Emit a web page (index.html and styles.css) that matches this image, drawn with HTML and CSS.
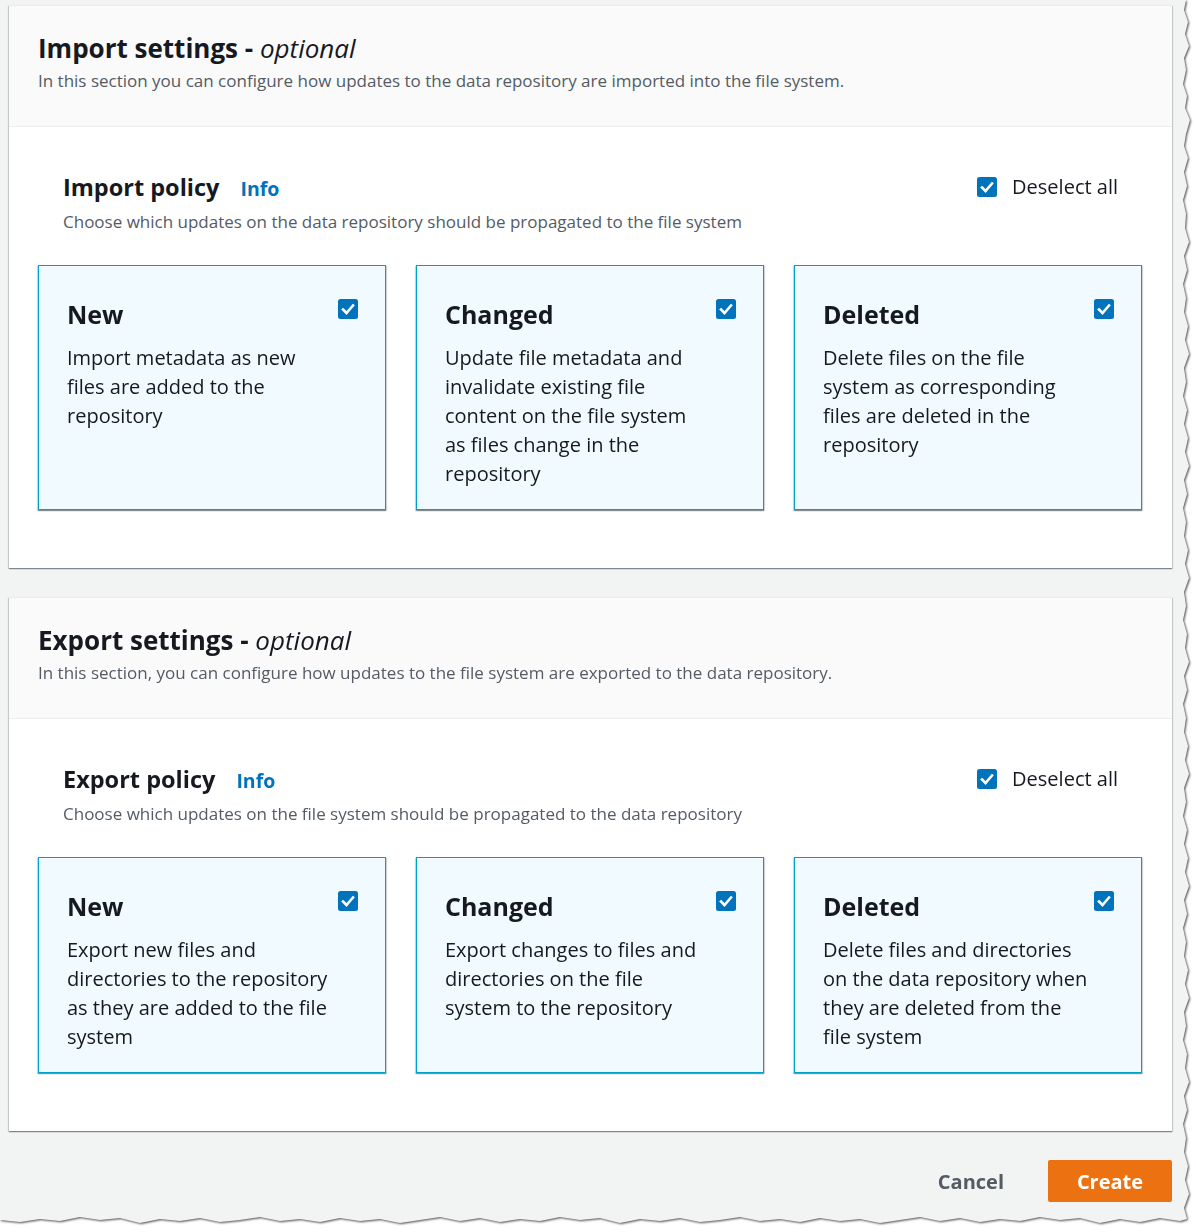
FILE: index.html
```html
<!DOCTYPE html>
<html lang="en">
<head>
<meta charset="utf-8">
<title>Import and export settings</title>
<link rel="stylesheet" href="styles.css">
</head>
<body>
<div class="sheet">
  <div class="paper">
    <section class="panel">
      <header class="panel-head">
        <h2>Import settings - <i>optional</i></h2>
        <p>In this section you can configure how updates to the data repository are imported into the file system.</p>
      </header>
      <div class="panel-body">
        <div class="policy-head">
          <div class="policy-text">
            <div class="policy-title"><h3>Import policy</h3><a class="info" href="#">Info</a></div>
            <p class="policy-desc">Choose which updates on the data repository should be propagated to the file system</p>
          </div>
          <label class="deselect">
            <svg class="cb" viewBox="0 0 20 20" width="20" height="20"><rect x="0" y="0" width="20" height="20" rx="2.5" fill="#0073bb"/><polyline points="5,10.5 8.5,14 15,6.5" fill="none" stroke="#fff" stroke-width="2.6" stroke-linecap="square"/></svg>
            <span>Deselect all</span>
          </label>
        </div>
        <div class="tiles">
          <div class="tile">
            <div class="tile-text"><h4>New</h4><p>Import metadata as new<br>files are added to the<br>repository</p></div>
            <svg class="cb" viewBox="0 0 20 20" width="20" height="20"><rect x="0" y="0" width="20" height="20" rx="2.5" fill="#0073bb"/><polyline points="5,10.5 8.5,14 15,6.5" fill="none" stroke="#fff" stroke-width="2.6" stroke-linecap="square"/></svg>
          </div>
          <div class="tile">
            <div class="tile-text"><h4>Changed</h4><p>Update file metadata and<br>invalidate existing file<br>content on the file system<br>as files change in the<br>repository</p></div>
            <svg class="cb" viewBox="0 0 20 20" width="20" height="20"><rect x="0" y="0" width="20" height="20" rx="2.5" fill="#0073bb"/><polyline points="5,10.5 8.5,14 15,6.5" fill="none" stroke="#fff" stroke-width="2.6" stroke-linecap="square"/></svg>
          </div>
          <div class="tile">
            <div class="tile-text"><h4>Deleted</h4><p>Delete files on the file<br>system as corresponding<br>files are deleted in the<br>repository</p></div>
            <svg class="cb" viewBox="0 0 20 20" width="20" height="20"><rect x="0" y="0" width="20" height="20" rx="2.5" fill="#0073bb"/><polyline points="5,10.5 8.5,14 15,6.5" fill="none" stroke="#fff" stroke-width="2.6" stroke-linecap="square"/></svg>
          </div>
        </div>
      </div>
    </section>

    <section class="panel">
      <header class="panel-head">
        <h2>Export settings - <i>optional</i></h2>
        <p>In this section, you can configure how updates to the file system are exported to the data repository.</p>
      </header>
      <div class="panel-body">
        <div class="policy-head">
          <div class="policy-text">
            <div class="policy-title"><h3>Export policy</h3><a class="info" href="#">Info</a></div>
            <p class="policy-desc">Choose which updates on the file system should be propagated to the data repository</p>
          </div>
          <label class="deselect">
            <svg class="cb" viewBox="0 0 20 20" width="20" height="20"><rect x="0" y="0" width="20" height="20" rx="2.5" fill="#0073bb"/><polyline points="5,10.5 8.5,14 15,6.5" fill="none" stroke="#fff" stroke-width="2.6" stroke-linecap="square"/></svg>
            <span>Deselect all</span>
          </label>
        </div>
        <div class="tiles">
          <div class="tile">
            <div class="tile-text"><h4>New</h4><p>Export new files and<br>directories to the repository<br>as they are added to the file<br>system</p></div>
            <svg class="cb" viewBox="0 0 20 20" width="20" height="20"><rect x="0" y="0" width="20" height="20" rx="2.5" fill="#0073bb"/><polyline points="5,10.5 8.5,14 15,6.5" fill="none" stroke="#fff" stroke-width="2.6" stroke-linecap="square"/></svg>
          </div>
          <div class="tile">
            <div class="tile-text"><h4>Changed</h4><p>Export changes to files and<br>directories on the file<br>system to the repository</p></div>
            <svg class="cb" viewBox="0 0 20 20" width="20" height="20"><rect x="0" y="0" width="20" height="20" rx="2.5" fill="#0073bb"/><polyline points="5,10.5 8.5,14 15,6.5" fill="none" stroke="#fff" stroke-width="2.6" stroke-linecap="square"/></svg>
          </div>
          <div class="tile">
            <div class="tile-text"><h4>Deleted</h4><p>Delete files and directories<br>on the data repository when<br>they are deleted from the<br>file system</p></div>
            <svg class="cb" viewBox="0 0 20 20" width="20" height="20"><rect x="0" y="0" width="20" height="20" rx="2.5" fill="#0073bb"/><polyline points="5,10.5 8.5,14 15,6.5" fill="none" stroke="#fff" stroke-width="2.6" stroke-linecap="square"/></svg>
          </div>
        </div>
      </div>
    </section>

    <div class="actions">
      <button class="btn-cancel" type="button">Cancel</button>
      <button class="btn-create" type="button">Create</button>
    </div>
  </div>
</div>
</body>
</html>
```
FILE: styles.css
```css
html, body {
  margin: 0;
  padding: 0;
  background: #ffffff;
}
body {
  font-family: "Open Sans", "Noto Sans", sans-serif;
  color: #16191f;
  width: 1196px;
  height: 1232px;
  overflow: hidden;
}
.sheet {
  filter: drop-shadow(1px 1px 1.2px rgba(0, 0, 0, 0.7));
  width: 1192px;
}
.paper {
  background: #f2f3f3;
  width: 1192px;
  height: 1226px;
  box-sizing: border-box;
  padding: 5px 20px 0 9px;
  clip-path: polygon(0 0, 1186px 0, 1184px 10px, 1188px 22px, 1185px 34px, 1189px 46px, 1184px 58px, 1186px 70px, 1183px 84px, 1187px 96px, 1185px 108px, 1190px 120px, 1186px 134px, 1184px 146px, 1188px 158px, 1184px 172px, 1187px 186px, 1183px 200px, 1186px 214px, 1185px 228px, 1189px 242px, 1184px 256px, 1187px 270px, 1183px 284px, 1186px 298px, 1184px 312px, 1188px 326px, 1185px 340px, 1189px 354px, 1184px 368px, 1186px 382px, 1183px 396px, 1187px 410px, 1184px 424px, 1188px 438px, 1185px 452px, 1189px 466px, 1184px 480px, 1187px 494px, 1183px 508px, 1186px 522px, 1184px 536px, 1188px 550px, 1185px 564px, 1189px 578px, 1184px 592px, 1186px 606px, 1183px 620px, 1187px 634px, 1185px 648px, 1189px 662px, 1184px 676px, 1187px 690px, 1183px 704px, 1186px 718px, 1184px 732px, 1188px 746px, 1185px 760px, 1189px 774px, 1184px 788px, 1186px 802px, 1183px 816px, 1187px 830px, 1184px 844px, 1188px 858px, 1185px 872px, 1189px 886px, 1184px 900px, 1187px 914px, 1183px 928px, 1186px 942px, 1184px 956px, 1188px 970px, 1185px 984px, 1189px 998px, 1184px 1012px, 1186px 1026px, 1183px 1040px, 1187px 1054px, 1185px 1068px, 1189px 1082px, 1184px 1096px, 1187px 1110px, 1183px 1124px, 1186px 1138px, 1184px 1152px, 1188px 1166px, 1185px 1180px, 1189px 1194px, 1184px 1208px, 1187px 1219px, 1180px 1221px, 1160px 1218px, 1140px 1222px, 1120px 1219px, 1100px 1223px, 1080px 1218px, 1060px 1220px, 1040px 1217px, 1020px 1221px, 1000px 1219px, 980px 1222px, 960px 1218px, 940px 1221px, 920px 1217px, 900px 1220px, 880px 1223px, 860px 1219px, 840px 1221px, 820px 1218px, 800px 1222px, 780px 1219px, 760px 1221px, 740px 1217px, 720px 1220px, 700px 1222px, 680px 1218px, 660px 1221px, 640px 1219px, 620px 1223px, 600px 1218px, 580px 1220px, 560px 1217px, 540px 1221px, 520px 1219px, 500px 1222px, 480px 1218px, 460px 1221px, 440px 1217px, 420px 1220px, 400px 1223px, 380px 1219px, 360px 1221px, 340px 1218px, 320px 1222px, 300px 1219px, 280px 1221px, 260px 1217px, 240px 1220px, 220px 1222px, 200px 1218px, 180px 1221px, 160px 1219px, 140px 1223px, 120px 1218px, 100px 1220px, 80px 1217px, 60px 1221px, 40px 1219px, 20px 1222px, 0 1220px);
}

/* panels */
.panel {
  width: 1163px;
  background: #ffffff;
  border-top: 1px solid #eaeded;
  box-shadow: 0 1px 1px 0 rgba(0, 28, 36, 0.3), 1px 1px 1px 0 rgba(0, 28, 36, 0.15), -1px 1px 1px 0 rgba(0, 28, 36, 0.15);
  margin-bottom: 29px;
}
.panel-head {
  background: #fafafa;
  border-bottom: 1px solid #eaeded;
  padding: 25px 29px 0 29px;
  height: 95px;
}
.panel-head h2 {
  margin: 0;
  font-size: 26px;
  line-height: 34px;
  font-weight: 700;
  color: #16191f;
}
.panel-head h2 i {
  font-weight: 400;
  font-style: italic;
}
.panel-head p {
  margin: 2px 0 0 0;
  font-size: 17px;
  line-height: 28px;
  color: #545b64;
}

.panel-body {
  padding: 43px 30px 58px 29px;
}
.policy-head {
  display: flex;
  justify-content: space-between;
  align-items: flex-start;
  padding: 0 25px 0 25px;
}
.policy-title {
  display: flex;
  align-items: baseline;
  gap: 21px;
}
.policy-title h3 {
  margin: 0;
  font-size: 23.5px;
  line-height: 34px;
  font-weight: 700;
}
.info {
  font-size: 19.5px;
  font-weight: 700;
  color: #0073bb;
  text-decoration: none;
}
.policy-desc {
  margin: 6px 0 0 0;
  font-size: 17px;
  line-height: 24px;
  color: #545b64;
}
.deselect {
  display: flex;
  align-items: center;
  gap: 15px;
  font-size: 20px;
  line-height: 24px;
  margin-top: 5px;
  margin-right: -1px;
  color: #16191f;
}
.cb {
  display: block;
  flex: none;
}

/* tiles */
.tiles {
  display: grid;
  grid-template-columns: repeat(3, minmax(0, 1fr));
  gap: 30px;
  margin-top: 31px;
}
.tile {
  background: #f1faff;
  border: 1px solid #00a1c9;
  box-shadow: 0 1px 1px 0 rgba(0, 28, 36, 0.3), 1px 1px 1px 0 rgba(0, 28, 36, 0.15), -1px 1px 1px 0 rgba(0, 28, 36, 0.15);
  display: flex;
  justify-content: space-between;
  align-items: flex-start;
  gap: 8px;
  padding: 31px 27px 21px 28px;
}
.tile .cb {
  margin-top: 2px;
}
.tile-text {
  flex: 1;
  min-width: 0;
}
.tile h4 {
  margin: 0;
  font-size: 25px;
  line-height: 34px;
  font-weight: 700;
}
.tile p {
  margin: 12px 0 0 0;
  font-size: 20px;
  line-height: 29px;
  color: #16191f;
  white-space: nowrap;
}

/* actions */
.actions {
  width: 1163px;
  display: flex;
  justify-content: flex-end;
  align-items: center;
  gap: 44px;
  margin-top: 0;
}
.btn-cancel {
  font-family: inherit;
  background: none;
  border: none;
  padding: 0;
  font-size: 20px;
  font-weight: 700;
  color: #545b64;
}
.btn-create {
  font-family: inherit;
  background: #ec7211;
  border: none;
  border-radius: 2px;
  width: 124px;
  height: 42px;
  font-size: 20px;
  font-weight: 700;
  color: #ffffff;
}
```
